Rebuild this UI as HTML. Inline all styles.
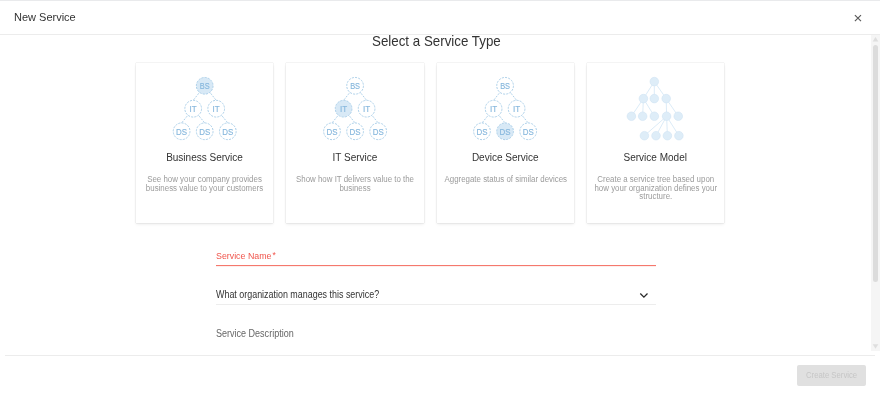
<!DOCTYPE html>
<html><head><meta charset="utf-8">
<style>
html,body{margin:0;padding:0;}
body{width:880px;height:400px;background:#fff;overflow:hidden;font-family:"Liberation Sans",sans-serif;}
#root{position:relative;width:880px;height:400px;will-change:transform;overflow:hidden;}
.abs{position:absolute;}
.topline{left:0;top:0;width:880px;height:1px;background:#e9eaec;}
.title{left:14px;top:10px;font-size:11px;line-height:14px;color:#333;white-space:nowrap;}
.hline{left:0;top:34px;width:880px;height:1px;background:#ececec;}
.track{left:871px;top:35px;width:9px;height:316px;background:#f5f5f5;}
.thumb{left:873px;top:45px;width:5px;height:237px;background:#dcdcdc;border-radius:3px;}
.h2{left:371.5px;top:31.5px;font-size:14.6px;line-height:18px;color:#333;white-space:nowrap;transform:scaleX(0.914);transform-origin:0 0;}
.card{width:138px;height:159.5px;top:63px;background:#fff;box-shadow:0 0 1px rgba(0,0,0,.26),0 1.5px 3px rgba(0,0,0,.07);}
.ct{position:absolute;left:-10px;right:-10px;top:88px;text-align:center;font-size:10px;line-height:14px;color:#333;white-space:nowrap;}
.cd{position:absolute;left:-10px;right:-10px;top:111.8px;text-align:center;font-size:8.5px;line-height:8.7px;color:#9b9b9b;white-space:nowrap;transform:scaleX(0.93);}
.lbl{left:215.5px;font-size:10px;line-height:12px;white-space:nowrap;transform-origin:0 0;}
.fline{left:216px;width:440px;height:1px;}
.fline2{left:5px;top:355px;width:870px;height:1px;background:#ececec;}
.btn{left:797px;top:365px;width:69px;height:21px;background:#e0e0e0;border-radius:2px;}
.btnt{left:805.5px;top:369px;font-size:8.5px;line-height:12px;color:#c6c6c6;white-space:nowrap;transform:scaleX(0.91);transform-origin:0 0;}
svg{position:absolute;left:0;top:0;overflow:visible;}
</style></head>
<body><div id="root">
<div class="abs topline"></div>
<div class="abs title">New Service</div>
<div class="abs hline"></div>
<div class="abs track"></div>
<div class="abs thumb"></div>
<div class="abs h2">Select a Service Type</div>
<div class="abs card" style="left:136px;width:137px"><div class="ct">Business Service</div><div class="cd">See how your company provides<br>business value to your customers</div></div>
<div class="abs card" style="left:286px;width:138px"><div class="ct">IT Service</div><div class="cd">Show how IT delivers value to the<br>business</div></div>
<div class="abs card" style="left:436.5px;width:137.5px"><div class="ct">Device Service</div><div class="cd">Aggregate status of similar devices</div></div>
<div class="abs card" style="left:586.5px;width:137.5px"><div class="ct">Service Model</div><div class="cd">Create a service tree based upon<br>how your organization defines your<br>structure.</div></div>
<svg width="880" height="400" viewBox="0 0 880 400">
<path d="M854.9 15.1L861 21.2M861 15.1L854.9 21.2" stroke="#5a5a5a" stroke-width="1.15" fill="none"/>
<path d="M875.5 36.9L878.3 41.4H872.7z" fill="#dedede"/><path d="M872.7 344.3H878.3L875.5 348.8z" fill="#dedede"/>
<g stroke="#a4cbe7" stroke-width="0.9" stroke-dasharray="1.9 1.3" fill="none">
<line x1="204.70" y1="85.80" x2="193.20" y2="100.35"/>
<line x1="204.70" y1="85.80" x2="216.20" y2="100.35"/>
<line x1="193.20" y1="108.70" x2="181.60" y2="122.95"/>
<line x1="193.20" y1="108.70" x2="204.70" y2="122.95"/>
<line x1="216.20" y1="108.70" x2="227.80" y2="122.95"/>
</g>
<g stroke="#a4cbe7" stroke-width="0.9" stroke-dasharray="2.1 1.15">
<circle cx="204.70" cy="85.80" r="8.35" fill="#d8e9f6"/>
<circle cx="193.20" cy="108.70" r="8.35" fill="#fff"/>
<circle cx="216.20" cy="108.70" r="8.35" fill="#fff"/>
<circle cx="181.60" cy="131.30" r="8.35" fill="#fff"/>
<circle cx="204.70" cy="131.30" r="8.35" fill="#fff"/>
<circle cx="227.80" cy="131.30" r="8.35" fill="#fff"/>
</g>
<g fill="#86b7dd" stroke="#86b7dd" stroke-width="0.15" font-family="Liberation Sans" font-size="8.8" text-anchor="middle">
<text x="204.70" y="89.10" textLength="9.9" lengthAdjust="spacingAndGlyphs">BS</text>
<text x="193.20" y="112.00" textLength="7.2" lengthAdjust="spacingAndGlyphs">IT</text>
<text x="216.20" y="112.00" textLength="7.2" lengthAdjust="spacingAndGlyphs">IT</text>
<text x="181.60" y="134.60" textLength="11.0" lengthAdjust="spacingAndGlyphs">DS</text>
<text x="204.70" y="134.60" textLength="11.0" lengthAdjust="spacingAndGlyphs">DS</text>
<text x="227.80" y="134.60" textLength="11.0" lengthAdjust="spacingAndGlyphs">DS</text>
</g>
<g stroke="#a4cbe7" stroke-width="0.9" stroke-dasharray="1.9 1.3" fill="none">
<line x1="355.10" y1="85.80" x2="343.60" y2="100.35"/>
<line x1="355.10" y1="85.80" x2="366.60" y2="100.35"/>
<line x1="343.60" y1="108.70" x2="332.00" y2="122.95"/>
<line x1="343.60" y1="108.70" x2="355.10" y2="122.95"/>
<line x1="366.60" y1="108.70" x2="378.20" y2="122.95"/>
</g>
<g stroke="#a4cbe7" stroke-width="0.9" stroke-dasharray="2.1 1.15">
<circle cx="355.10" cy="85.80" r="8.35" fill="#fff"/>
<circle cx="343.60" cy="108.70" r="8.35" fill="#d8e9f6"/>
<circle cx="366.60" cy="108.70" r="8.35" fill="#fff"/>
<circle cx="332.00" cy="131.30" r="8.35" fill="#fff"/>
<circle cx="355.10" cy="131.30" r="8.35" fill="#fff"/>
<circle cx="378.20" cy="131.30" r="8.35" fill="#fff"/>
</g>
<g fill="#86b7dd" stroke="#86b7dd" stroke-width="0.15" font-family="Liberation Sans" font-size="8.8" text-anchor="middle">
<text x="355.10" y="89.10" textLength="9.9" lengthAdjust="spacingAndGlyphs">BS</text>
<text x="343.60" y="112.00" textLength="7.2" lengthAdjust="spacingAndGlyphs">IT</text>
<text x="366.60" y="112.00" textLength="7.2" lengthAdjust="spacingAndGlyphs">IT</text>
<text x="332.00" y="134.60" textLength="11.0" lengthAdjust="spacingAndGlyphs">DS</text>
<text x="355.10" y="134.60" textLength="11.0" lengthAdjust="spacingAndGlyphs">DS</text>
<text x="378.20" y="134.60" textLength="11.0" lengthAdjust="spacingAndGlyphs">DS</text>
</g>
<g stroke="#a4cbe7" stroke-width="0.9" stroke-dasharray="1.9 1.3" fill="none">
<line x1="505.10" y1="85.80" x2="493.60" y2="100.35"/>
<line x1="505.10" y1="85.80" x2="516.60" y2="100.35"/>
<line x1="493.60" y1="108.70" x2="482.00" y2="122.95"/>
<line x1="493.60" y1="108.70" x2="505.10" y2="122.95"/>
<line x1="516.60" y1="108.70" x2="528.20" y2="122.95"/>
</g>
<g stroke="#a4cbe7" stroke-width="0.9" stroke-dasharray="2.1 1.15">
<circle cx="505.10" cy="85.80" r="8.35" fill="#fff"/>
<circle cx="493.60" cy="108.70" r="8.35" fill="#fff"/>
<circle cx="516.60" cy="108.70" r="8.35" fill="#fff"/>
<circle cx="482.00" cy="131.30" r="8.35" fill="#fff"/>
<circle cx="505.10" cy="131.30" r="8.35" fill="#d8e9f6"/>
<circle cx="528.20" cy="131.30" r="8.35" fill="#fff"/>
</g>
<g fill="#86b7dd" stroke="#86b7dd" stroke-width="0.15" font-family="Liberation Sans" font-size="8.8" text-anchor="middle">
<text x="505.10" y="89.10" textLength="9.9" lengthAdjust="spacingAndGlyphs">BS</text>
<text x="493.60" y="112.00" textLength="7.2" lengthAdjust="spacingAndGlyphs">IT</text>
<text x="516.60" y="112.00" textLength="7.2" lengthAdjust="spacingAndGlyphs">IT</text>
<text x="482.00" y="134.60" textLength="11.0" lengthAdjust="spacingAndGlyphs">DS</text>
<text x="505.10" y="134.60" textLength="11.0" lengthAdjust="spacingAndGlyphs">DS</text>
<text x="528.20" y="134.60" textLength="11.0" lengthAdjust="spacingAndGlyphs">DS</text>
</g>
<g stroke="#d5e7f5" stroke-width="0.85">
<line x1="654.3" y1="81.6" x2="643.4" y2="98.6"/>
<line x1="654.3" y1="81.6" x2="654.3" y2="98.6"/>
<line x1="654.3" y1="81.6" x2="666.2" y2="98.6"/>
<line x1="643.4" y1="98.6" x2="631.4" y2="116.25"/>
<line x1="643.4" y1="98.6" x2="642.65" y2="116.25"/>
<line x1="643.4" y1="98.6" x2="654.35" y2="116.25"/>
<line x1="666.2" y1="98.6" x2="666.6" y2="116.25"/>
<line x1="666.2" y1="98.6" x2="678.25" y2="116.25"/>
<line x1="666.6" y1="116.25" x2="644.4" y2="135.7"/>
<line x1="666.6" y1="116.25" x2="656.0" y2="135.7"/>
<line x1="666.6" y1="116.25" x2="667.4" y2="135.7"/>
<line x1="666.6" y1="116.25" x2="678.9" y2="135.7"/>
</g>
<g fill="#deedf8" stroke="#cde2f2" stroke-width="0.55">
<circle cx="654.3" cy="81.6" r="4.3"/>
<circle cx="643.4" cy="98.6" r="4.3"/>
<circle cx="654.3" cy="98.6" r="4.3"/>
<circle cx="666.2" cy="98.6" r="4.3"/>
<circle cx="631.4" cy="116.25" r="4.3"/>
<circle cx="642.65" cy="116.25" r="4.3"/>
<circle cx="654.35" cy="116.25" r="4.3"/>
<circle cx="666.6" cy="116.25" r="4.3"/>
<circle cx="678.25" cy="116.25" r="4.3"/>
<circle cx="644.4" cy="135.7" r="4.3"/>
<circle cx="656.0" cy="135.7" r="4.3"/>
<circle cx="667.4" cy="135.7" r="4.3"/>
<circle cx="678.9" cy="135.7" r="4.3"/>
</g>
<path d="M640.3 293.5L643.9 297.1L647.5 293.5" stroke="#2a2a2a" stroke-width="1.3" fill="none"/>
</svg>
<div class="abs lbl" style="top:249.6px;color:#f0544b;font-size:9.3px;transform:scaleX(0.95)">Service Name<span style="font-size:9px;position:relative;top:-0.4px;margin-left:1px">*</span></div>
<div class="abs fline" style="top:265px;background:#f5786d;box-shadow:0 1px 0 #fdeeec"></div>
<div class="abs lbl" style="top:289px;color:#333;transform:scaleX(0.892)">What organization manages this service?</div>
<div class="abs fline" style="top:304px;background:#ededed"></div>
<div class="abs lbl" style="top:328px;color:#666;transform:scaleX(0.902)">Service Description</div>
<div class="abs fline2"></div>
<div class="abs btn"></div><div class="abs btnt">Create Service</div>
</div></body></html>
